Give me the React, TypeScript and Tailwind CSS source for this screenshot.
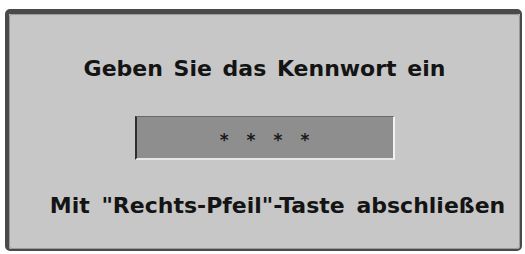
import React from 'react';

const App = () => {
  return (
    <div className="w-[525px] h-[254px] bg-white pt-[9px] pl-[5px] pr-[3px] pb-[3px]" style={{ fontFamily: '"DejaVu Sans", sans-serif' }}>
      <div className="h-full rounded-[5px] border-t-[5px] border-l-[4px] border-r-[2px] border-b-[2px] border-[#4a4a4a] bg-[#c7c7c7]">
        <div className="h-full rounded-[3px] border border-[#9a9a9a] flex flex-col items-center">
          <h1 className="mt-[43px] font-bold text-[22px] leading-none text-[#141414] [word-spacing:3px]">
            Geben Sie das Kennwort ein
          </h1>

          {/* password field */}
          <div className="mt-[36px] w-[260px] h-[44px] bg-[#8e8e8e] border-l-2 border-t border-l-[#2e2e2e] border-t-[#6a6a6a] border-r-2 border-b-2 border-r-[#f2f2f2] border-b-[#e6e6e6] flex items-center justify-center gap-[18px] pt-[6px] text-[#1a1a1a] text-[17px] font-bold leading-none">
            <span>*</span>
            <span>*</span>
            <span>*</span>
            <span>*</span>
          </div>

          <p className="mt-[35px] ml-[26px] font-bold text-[22px] leading-none text-[#141414] [word-spacing:4px]">
            Mit "Rechts-Pfeil"-Taste abschließen
          </p>
        </div>
      </div>
    </div>
  );
};

export default App;
